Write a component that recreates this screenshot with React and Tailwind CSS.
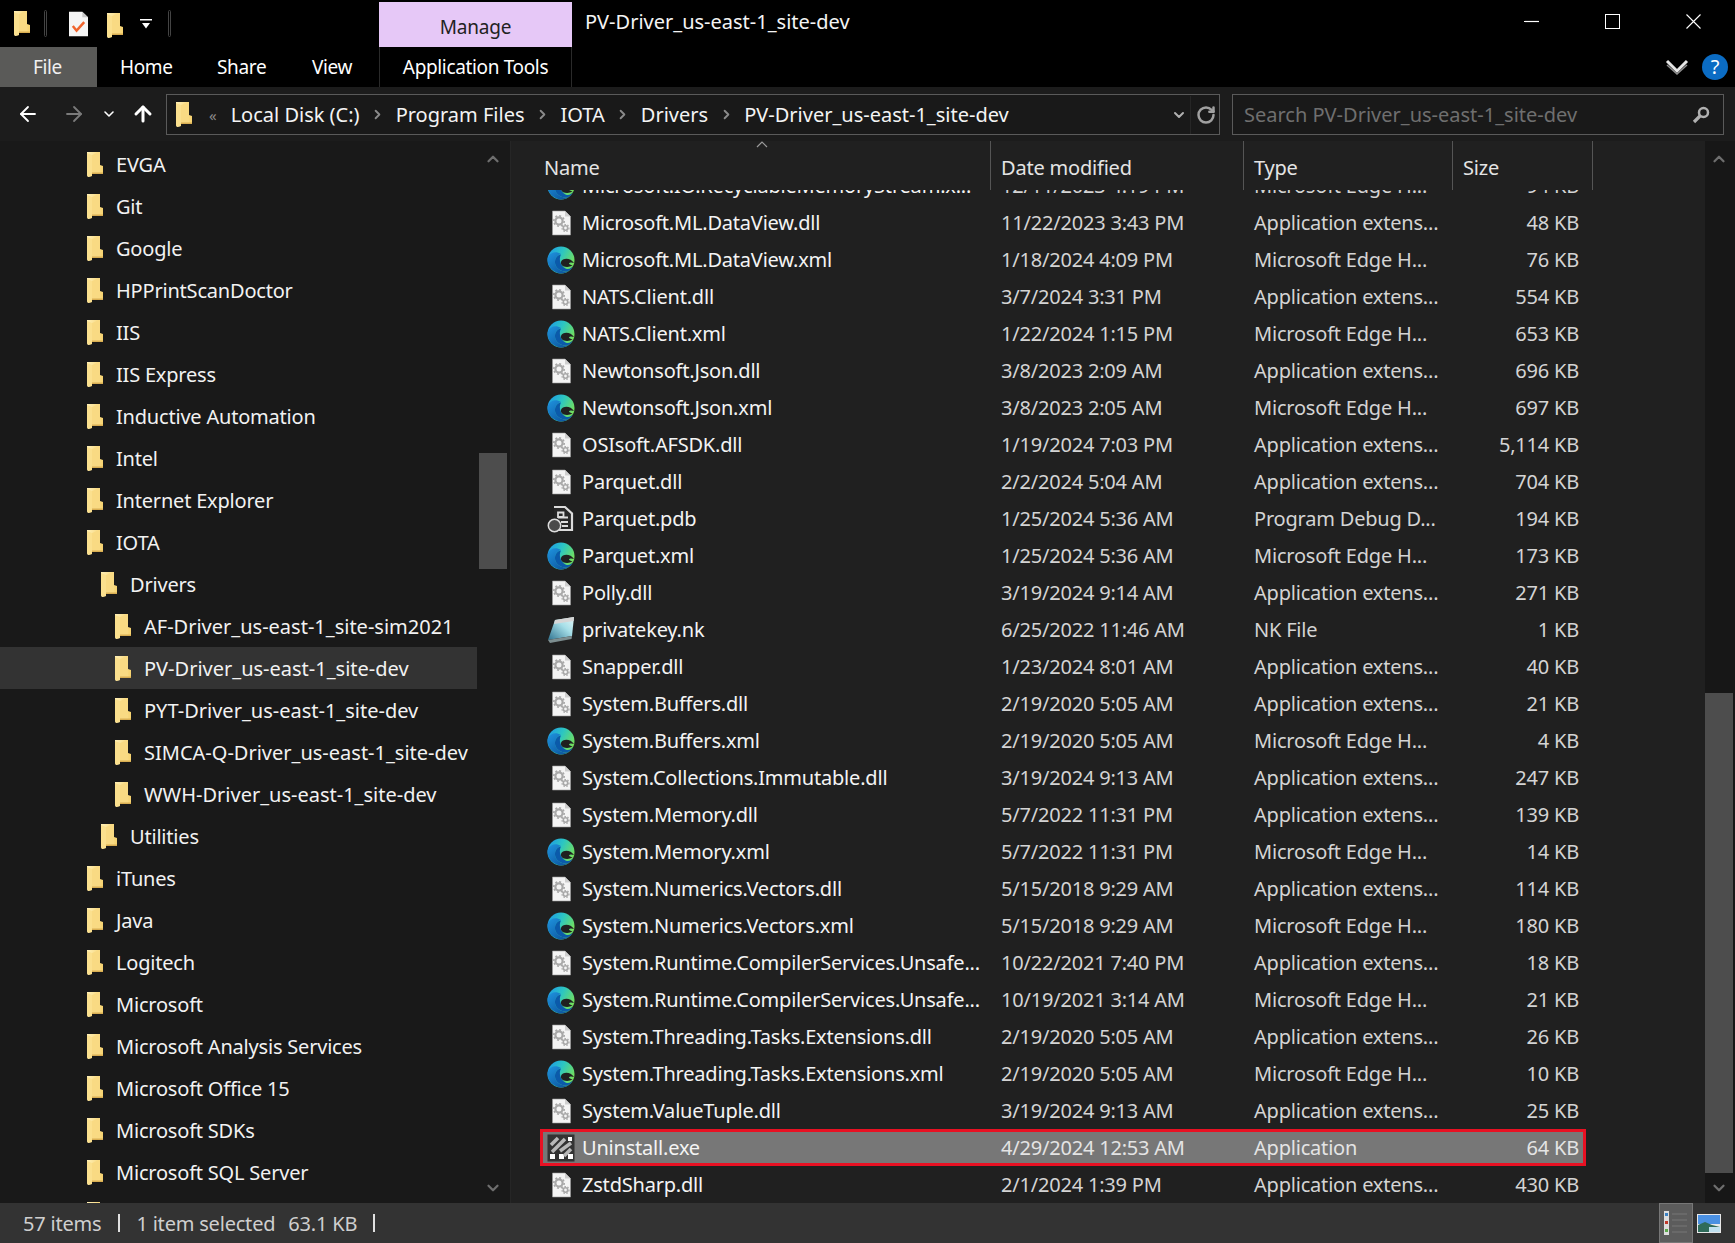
import React from "react";
import { ArrowLeft, ArrowRight, ArrowUp, ChevronDown, ChevronUp, ChevronRight, RotateCw } from "lucide-react";

const Folder = ({ className = "" }) => (
  <svg viewBox="0 0 17 25" className={`w-[17px] h-[25px] shrink-0 ${className}`}>
    <defs>
      <linearGradient id="fb" x1="0" y1="0" x2="1" y2="0">
        <stop offset="0" stopColor="#fff0b8" />
        <stop offset="1" stopColor="#f6d26f" />
      </linearGradient>
    </defs>
    <path d="M1 0H14V13L17 14V22H6V24L2 25L1 23Z" fill="url(#fb)" />
    <path d="M1 1L6 3V24L2 25L1 23Z" fill="#fbe08e" />
    <path d="M6 3V22H14V0H13Z" fill="#f9da83" />
    <path d="M6 20.5H17V22H6Z" fill="#d9ae52" />
  </svg>
);

const DllIcon = () => (
  <svg viewBox="0 0 28 28" className="w-[28px] h-[28px] shrink-0">
    <path d="M5.5 2H18L23.5 7.5V26H5.5Z" fill="#f4f4f4" stroke="#9a9a9a" strokeWidth="0.6" />
    <path d="M18 2V7.5H23.5Z" fill="#cfcfcf" />
    <circle cx="12" cy="12" r="3.6" fill="none" stroke="#a8a8a8" strokeWidth="2.2" />
    <circle cx="12" cy="12" r="5.2" fill="none" stroke="#a8a8a8" strokeWidth="1.6" strokeDasharray="2 2" />
    <circle cx="18.5" cy="19" r="2.2" fill="none" stroke="#a8a8a8" strokeWidth="1.6" />
    <circle cx="18.5" cy="19" r="3.5" fill="none" stroke="#a8a8a8" strokeWidth="1.2" strokeDasharray="1.5 1.5" />
  </svg>
);

const EdgeIcon = () => (
  <svg viewBox="0 0 28 28" className="w-[28px] h-[28px] shrink-0">
    <defs>
      <linearGradient id="e1" x1="0.1" y1="0.1" x2="1" y2="0.55">
        <stop offset="0" stopColor="#1f9fe2" />
        <stop offset="0.45" stopColor="#2cc6c2" />
        <stop offset="1" stopColor="#74e05a" />
      </linearGradient>
      <linearGradient id="e2" x1="0" y1="0" x2="0.8" y2="1">
        <stop offset="0" stopColor="#1f93de" />
        <stop offset="1" stopColor="#0c559f" />
      </linearGradient>
    </defs>
    <circle cx="14" cy="14" r="13.5" fill="url(#e1)" />
    <path d="M0.6 12C3 6 9 5 14 8C9 9.500 7 14 8.500 19C10.500 24 17 27 22 24.800C19 27.500 14.500 28.200 11 27C4 25 0 19 0.600 12Z" fill="url(#e2)" />
    <path d="M8.500 19C7 14 9 9.500 14 8.500C11.500 13 13 19.500 18.500 22.500C21.500 24 24.500 22.500 26 19.500C25 22.500 23.500 24 22 24.800C17 27 10.500 24 8.500 19Z" fill="#0b5aaa" />
    <path d="M27 17C24.500 13 19.500 11.800 16 13.500C13 15.200 13.500 18.800 16.200 20.200C19.500 21.500 23 21 25.500 19.500C23.500 19 22 18.200 22 17.300C22.500 16.300 25 16.200 27 17Z" fill="#202020" />
  </svg>
);

const PdbIcon = () => (
  <svg viewBox="0 0 28 28" className="w-[28px] h-[28px] shrink-0">
    <path d="M7 2H18L25 8.500V25H8" fill="#262626" stroke="#dcdcdc" strokeWidth="2.200" />
    <path d="M11 7.500H16.500V12H11ZM11 12.500H21M14 17H21M15 21H21" stroke="#dcdcdc" strokeWidth="1.800" fill="none" />
    <circle cx="7.500" cy="20.500" r="6.200" fill="#4a4a4a" stroke="#dcdcdc" strokeWidth="1.500" />
  </svg>
);

const NkIcon = () => (
  <svg viewBox="0 0 28 28" className="w-[28px] h-[28px] shrink-0">
    <defs>
      <linearGradient id="nk" x1="0" y1="1" x2="1" y2="0">
        <stop offset="0" stopColor="#2f7390" />
        <stop offset="0.6" stopColor="#a6dfe8" />
        <stop offset="1" stopColor="#e6f7f7" />
      </linearGradient>
    </defs>
    <path d="M8 4L27 1L25 20L1 24Z" fill="url(#nk)" />
    <path d="M8 4L27 1L26.600 5L7 8Z" fill="#d6d6d6" />
    <path d="M1 24L25 20L24.500 23L3 27Z" fill="#7d8e90" />
  </svg>
);

const ExeIcon = () => (
  <svg viewBox="0 0 28 28" className="w-[28px] h-[28px] shrink-0">
    <rect x="0.500" y="0.500" width="27" height="27" fill="#333" />
    <g fill="#fff">
      <rect x="3" y="20" width="5" height="5" />
      <rect x="12" y="20" width="5" height="5" />
      <rect x="21" y="20" width="5" height="5" />
      <rect x="21" y="3" width="4" height="4" />
    </g>
    <g stroke="#b8b8b8" strokeWidth="3.500">
      <path d="M4 11L11 4" />
      <path d="M5 18L18 5" />
      <path d="M13 17L24 9" />
      <path d="M17 22L24 15" />
    </g>
  </svg>
);

const ICONS = { dll: DllIcon, xml: EdgeIcon, pdb: PdbIcon, nk: NkIcon, exe: ExeIcon };
const APP = "Application extens...";
const EDGE = "Microsoft Edge H...";

const FILES = [
  ["xml", "Microsoft.IO.RecyclableMemoryStream.x...", "12/11/2023 4:19 PM", EDGE, "94 KB"],
  ["dll", "Microsoft.ML.DataView.dll", "11/22/2023 3:43 PM", APP, "48 KB"],
  ["xml", "Microsoft.ML.DataView.xml", "1/18/2024 4:09 PM", EDGE, "76 KB"],
  ["dll", "NATS.Client.dll", "3/7/2024 3:31 PM", APP, "554 KB"],
  ["xml", "NATS.Client.xml", "1/22/2024 1:15 PM", EDGE, "653 KB"],
  ["dll", "Newtonsoft.Json.dll", "3/8/2023 2:09 AM", APP, "696 KB"],
  ["xml", "Newtonsoft.Json.xml", "3/8/2023 2:05 AM", EDGE, "697 KB"],
  ["dll", "OSIsoft.AFSDK.dll", "1/19/2024 7:03 PM", APP, "5,114 KB"],
  ["dll", "Parquet.dll", "2/2/2024 5:04 AM", APP, "704 KB"],
  ["pdb", "Parquet.pdb", "1/25/2024 5:36 AM", "Program Debug D...", "194 KB"],
  ["xml", "Parquet.xml", "1/25/2024 5:36 AM", EDGE, "173 KB"],
  ["dll", "Polly.dll", "3/19/2024 9:14 AM", APP, "271 KB"],
  ["nk", "privatekey.nk", "6/25/2022 11:46 AM", "NK File", "1 KB"],
  ["dll", "Snapper.dll", "1/23/2024 8:01 AM", APP, "40 KB"],
  ["dll", "System.Buffers.dll", "2/19/2020 5:05 AM", APP, "21 KB"],
  ["xml", "System.Buffers.xml", "2/19/2020 5:05 AM", EDGE, "4 KB"],
  ["dll", "System.Collections.Immutable.dll", "3/19/2024 9:13 AM", APP, "247 KB"],
  ["dll", "System.Memory.dll", "5/7/2022 11:31 PM", APP, "139 KB"],
  ["xml", "System.Memory.xml", "5/7/2022 11:31 PM", EDGE, "14 KB"],
  ["dll", "System.Numerics.Vectors.dll", "5/15/2018 9:29 AM", APP, "114 KB"],
  ["xml", "System.Numerics.Vectors.xml", "5/15/2018 9:29 AM", EDGE, "180 KB"],
  ["dll", "System.Runtime.CompilerServices.Unsafe...", "10/22/2021 7:40 PM", APP, "18 KB"],
  ["xml", "System.Runtime.CompilerServices.Unsafe...", "10/19/2021 3:14 AM", EDGE, "21 KB"],
  ["dll", "System.Threading.Tasks.Extensions.dll", "2/19/2020 5:05 AM", APP, "26 KB"],
  ["xml", "System.Threading.Tasks.Extensions.xml", "2/19/2020 5:05 AM", EDGE, "10 KB"],
  ["dll", "System.ValueTuple.dll", "3/19/2024 9:13 AM", APP, "25 KB"],
  ["exe", "Uninstall.exe", "4/29/2024 12:53 AM", "Application", "64 KB", true],
  ["dll", "ZstdSharp.dll", "2/1/2024 1:39 PM", APP, "430 KB"],
];

const TREE = [
  ["EVGA", 0], ["Git", 0], ["Google", 0], ["HPPrintScanDoctor", 0], ["IIS", 0], ["IIS Express", 0],
  ["Inductive Automation", 0], ["Intel", 0], ["Internet Explorer", 0], ["IOTA", 0], ["Drivers", 1],
  ["AF-Driver_us-east-1_site-sim2021", 2], ["PV-Driver_us-east-1_site-dev", 2, true],
  ["PYT-Driver_us-east-1_site-dev", 2], ["SIMCA-Q-Driver_us-east-1_site-dev", 2],
  ["WWH-Driver_us-east-1_site-dev", 2], ["Utilities", 1], ["iTunes", 0], ["Java", 0], ["Logitech", 0],
  ["Microsoft", 0], ["Microsoft Analysis Services", 0], ["Microsoft Office 15", 0], ["Microsoft SDKs", 0],
  ["Microsoft SQL Server", 0], ["", 0],
];

const INDENT = ["pl-[86px]", "pl-[100px]", "pl-[114px]"];
const Crumb = () => <ChevronRight size={15} strokeWidth={3} className="text-[#8a8a8a] mx-[10.5px] shrink-0" />;

function TreeRow({ name, level, selected }) {
  return (
    <div className={`h-[42px] shrink-0 flex items-center gap-[13px] ${INDENT[level]} ${selected ? "bg-[#333333]" : ""}`}>
      <Folder />
      <span className={`whitespace-nowrap text-[#f2f2f2] pt-[2px] ${level === 2 ? "tracking-normal" : ""}`}>{name}</span>
    </div>
  );
}

function FileRow({ f }) {
  const [kind, name, date, type, size, selected] = f;
  const Icon = ICONS[kind];
  const sub = selected ? "text-[#e4e4e4]" : "text-[#d4d4d4]";
  return (
    <div
      className={`h-[37px] shrink-0 ml-[29px] w-[1046px] grid grid-cols-[450px_253px_209px_134px] items-center whitespace-nowrap ${
        selected ? "bg-[#777777] outline-[3px] -outline-offset-[3px] outline-[#e81123]" : ""
      }`}
    >
      <div className="flex items-center gap-[7px] pl-[7px] text-[#f4f4f4]"><Icon />{name}</div>
      <div className={`pl-[11px] ${sub}`}>{date}</div>
      <div className={`pl-[11px] ${sub}`}>{type}</div>
      <div className={`pr-[7px] text-right ${sub}`}>{size}</div>
    </div>
  );
}

export default function App() {
  return (
    <div
      className="w-[1735px] h-[1243px] overflow-hidden flex flex-col bg-black text-white text-[20px] leading-[28px] tracking-[-0.2px]"
      style={{ fontFamily: '"Noto Sans", "Open Sans", sans-serif' }}
    >
      {/* Title row */}
      <div className="h-[47px] shrink-0 flex items-start">
        <div className="w-[379px] h-full flex items-center pl-[13px]">
          <Folder />
          <div className="ml-[14px] w-[3px] h-[27px] rounded-sm border border-[#444]" />
          <svg viewBox="0 0 20 26" className="ml-[22px] w-[19px] h-[26px]">
            <path d="M0 0H14L20 6V26H0Z" fill="#f5f5f5" />
            <path d="M14 0V6H20Z" fill="#c8c8c8" />
            <path d="M4 15L8 20L16 11" stroke="#f0642d" strokeWidth="2.6" fill="none" />
          </svg>
          <Folder className="ml-[18px] mt-[3px]" />
          <svg viewBox="0 0 12 10" className="ml-[17px] w-[12px] h-[10px]">
            <path d="M0 0H12V1.500H0Z" fill="#fff" />
            <path d="M2 4H10L6 9.500Z" fill="#fff" />
          </svg>
          <div className="ml-[16px] w-[3px] h-[27px] rounded-sm border border-[#444]" />
        </div>
        <div className="w-[193px] h-[45px] mt-[2px] bg-[#e6c8f7] text-[#222] text-[19px] flex items-center justify-center pt-[4px]">Manage</div>
        <div className="pl-[13px] pt-[8px] whitespace-nowrap text-[#f4f4f4] tracking-normal">PV-Driver_us-east-1_site-dev</div>
        <div className="ml-auto flex items-start h-full pt-[14px] pr-[34px]">
          <svg viewBox="0 0 15 15" className="w-[15px] h-[15px] mr-[66px]"><path d="M0 7.500H15" stroke="#fff" strokeWidth="1.200" /></svg>
          <div className="w-[15px] h-[15px] border border-white mr-[66px]" />
          <svg viewBox="0 0 15 15" className="w-[15px] h-[15px]"><path d="M0.500 0.500L14.500 14.500M14.500 0.500L0.500 14.500" stroke="#fff" strokeWidth="1.100" /></svg>
        </div>
      </div>
      {/* Ribbon tabs */}
      <div className="h-[40px] shrink-0 flex items-center text-[19px] tracking-[-0.35px]">
        <div className="w-[97px] h-full bg-[#5a5a58] flex items-center justify-center text-[#f0f0f0] pr-[2px]">File</div>
        <div className="pl-[23px] w-[120px]">Home</div>
        <div className="w-[95px]">Share</div>
        <div className="w-[67px]">View</div>
        <div className="w-[193px] h-full flex items-center justify-center border-x border-[#2a2a2a]">Application Tools</div>
        <div className="ml-auto flex items-center pr-[7px] gap-[13px]">
          <svg viewBox="0 0 24 16" className="w-[24px] h-[16px]">
            <path d="M2 2L12 12L22 2" stroke="#e6e6e6" strokeWidth="3" fill="none" />
            <path d="M2 6L12 15L22 6" stroke="#8d8d8d" strokeWidth="1.500" fill="none" />
          </svg>
          <div className="w-[26px] h-[26px] rounded-full bg-[#0b6cc4] flex items-center justify-center text-[20px] text-white">?</div>
        </div>
      </div>
      {/* Address row */}
      <div className="h-[54px] shrink-0 bg-[#1c1c1c] flex items-center tracking-normal">
        <div className="w-[166px] flex items-center text-white">
          <ArrowLeft size={24} strokeWidth={1.8} className="ml-[16px]" />
          <ArrowRight size={24} strokeWidth={1.8} className="ml-[22px] text-[#7a7a7a]" />
          <ChevronDown size={16} strokeWidth={2.4} className="ml-[15px]" />
          <ArrowUp size={24} strokeWidth={3} className="ml-[14px]" />
        </div>
        <div className="w-[1054px] h-[41px] border border-[#5a5a5a] bg-[#191919] flex items-center whitespace-nowrap text-[#f4f4f4] pt-[1px]">
          <Folder className="ml-[8px]" />
          <span className="ml-[17px] text-[#8a8a8a] text-[15px]">«</span>
          <span className="ml-[14px]">Local Disk (C:)</span>
          <Crumb />
          <span>Program Files</span>
          <Crumb />
          <span>IOTA</span>
          <Crumb />
          <span>Drivers</span>
          <Crumb />
          <span>PV-Driver_us-east-1_site-dev</span>
          <div className="ml-auto flex items-center h-full">
            <ChevronDown size={16} strokeWidth={3} className="text-[#b0b0b0] mr-[3px]" />
            <div className="w-px h-full bg-[#262626]" />
            <RotateCw size={20} strokeWidth={3} className="text-[#a0a0a0] ml-[5px] mr-[3px]" />
          </div>
        </div>
        <div className="ml-[12px] w-[492px] h-[41px] border border-[#5a5a5a] bg-[#191919] flex items-center pl-[11px] pr-[13px] pt-[1px] text-[#6f6f6f] whitespace-nowrap">
          <span>Search PV-Driver_us-east-1_site-dev</span>
          <svg viewBox="0 0 18 18" className="ml-auto w-[18px] h-[18px]">
            <circle cx="11.500" cy="6.500" r="4.500" fill="none" stroke="#b0b0b0" strokeWidth="2.500" />
            <path d="M8 10L2 16" stroke="#b0b0b0" strokeWidth="3.200" />
          </svg>
        </div>
      </div>
      {/* Main */}
      <div className="flex-1 min-h-0 flex">
        {/* Tree */}
        <div className="w-[511px] shrink-0 h-full bg-[#191919] flex border-r border-[#262626]">
          <div className="w-[477px] h-full overflow-hidden flex flex-col pt-[2px]">
            {TREE.map((t, i) => <TreeRow key={i} name={t[0]} level={t[1]} selected={t[2]} />)}
          </div>
          <div className="ml-[2px] w-[28px] h-full flex flex-col items-center">
            <div className="h-[36px] shrink-0 flex items-center justify-center"><ChevronUp size={18} strokeWidth={3} className="text-[#6e6e6e]" /></div>
            <div className="h-[276px] shrink-0" />
            <div className="h-[116px] w-full shrink-0 bg-[#4d4d4d]" />
            <div className="flex-1" />
            <div className="h-[30px] shrink-0 flex items-center justify-center"><ChevronDown size={18} strokeWidth={3} className="text-[#6e6e6e]" /></div>
          </div>
        </div>
        {/* File pane */}
        <div className="flex-1 min-w-0 h-full bg-[#202020] flex flex-col overflow-hidden">
          <div className="relative z-10 h-[49px] shrink-0 bg-[#202020] ml-[29px] grid grid-cols-[451px_253px_209px_140px] text-[#e4e4e4]">
            <div className="relative pl-[4px] pt-[13px] border-r border-[#555]">
              Name
              <svg viewBox="0 0 12 7" className="absolute top-0 left-[216px] w-[12px] h-[7px]">
                <path d="M1 6L6 1L11 6" stroke="#9a9a9a" strokeWidth="1.200" fill="none" />
              </svg>
            </div>
            <div className="pl-[10px] pt-[13px] border-r border-[#555]">Date modified</div>
            <div className="pl-[10px] pt-[13px] border-r border-[#555]">Type</div>
            <div className="pl-[10px] pt-[13px] border-r border-[#555]">Size</div>
          </div>
          <div className="flex flex-col -mt-[23px]">
            {FILES.map((f, i) => <FileRow key={i} f={f} />)}
          </div>
        </div>
        {/* Main scrollbar */}
        <div className="w-[30px] shrink-0 h-full bg-[#171717] flex flex-col pr-[2px]">
          <div className="h-[36px] shrink-0 flex items-center justify-center"><ChevronUp size={18} strokeWidth={3} className="text-[#6e6e6e]" /></div>
          <div className="h-[516px] shrink-0" />
          <div className="h-[480px] shrink-0 bg-[#4d4d4d]" />
          <div className="flex-1 flex items-center justify-center"><ChevronDown size={18} strokeWidth={3} className="text-[#6e6e6e]" /></div>
        </div>
      </div>
      {/* Status bar */}
      <div className="h-[40px] shrink-0 bg-[#333333] flex items-center text-[#cfcfcf] whitespace-nowrap">
        <span className="ml-[23px] pt-[1px]">57 items</span>
        <div className="ml-[17px] w-[2px] h-[18px] bg-[#e0e0e0]" />
        <span className="ml-[16px] pt-[1px]">1 item selected</span>
        <span className="ml-[13px] pt-[1px]">63.1 KB</span>
        <div className="ml-[16px] w-[2px] h-[18px] bg-[#e0e0e0]" />
        <div className="ml-auto flex items-center h-full pr-[14px]">
          <div className="w-[34px] h-full bg-[#5c5c5c] border border-[#777] flex items-center justify-center gap-[2px]">
            <svg viewBox="0 0 24 24" className="w-[24px] h-[24px]">
              <rect x="0" y="0" width="5" height="24" fill="#ddd" />
              <rect x="1" y="2" width="3" height="3" fill="#3b82c4" />
              <rect x="1" y="10" width="3" height="3" fill="#c0392b" />
              <rect x="1" y="18" width="3" height="3" fill="#5aa84a" />
              <path d="M8 3H23M8 9H23M8 15H23M8 21H23" stroke="#777" strokeWidth="1" />
            </svg>
          </div>
          <svg viewBox="0 0 24 19" className="ml-[4px] w-[24px] h-[19px]">
            <rect width="24" height="19" fill="#e8e8e8" />
            <rect x="1" y="1" width="22" height="9" fill="#4a90e2" />
            <path d="M1 11L8 8L15 11L23 13V18H1Z" fill="#2f6b5a" />
            <rect x="12" y="13" width="11" height="5" fill="#bfe0ef" />
          </svg>
        </div>
      </div>
    </div>
  );
}
